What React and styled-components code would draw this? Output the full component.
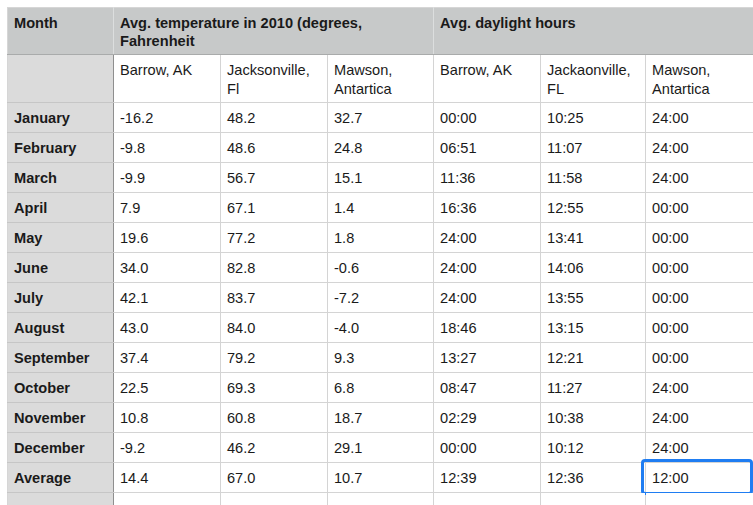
import React from "react";
import styled, { createGlobalStyle } from "styled-components";

const Global = createGlobalStyle`
  html, body { margin: 0; padding: 0; background: #ffffff; overflow: hidden; }
  body { font-family: "Liberation Sans", Arial, sans-serif; }
`;

const Page = styled.div`
  padding: 7px 0 0 7px;
  width: 753px;
  height: 505px;
  box-sizing: border-box;
  overflow: hidden;
`;

const Table = styled.table`
  border-collapse: collapse;
  table-layout: fixed;
  width: 746px;
  font-size: 14.6px;
  color: #1a1a1a;
  border-top: 1px solid #d6d6d6;
  border-left: 1px solid #d6d6d6;
`;

const Col = styled.col``;

const HeadCell = styled.th`
  background: #c7c9c9;
  font-weight: bold;
  text-align: left;
  vertical-align: top;
  padding: 6px 6px 0 6px;
  height: 40px;
  line-height: 18px;
  border-right: 1px solid #dcdede;
  border-bottom: 1px solid #a9abab;
`;

const SubCell = styled.td`
  vertical-align: top;
  padding: 6px 6px 0 6px;
  height: 41px;
  line-height: 19px;
  border-right: 1px solid #d4d4d4;
  border-bottom: 1px solid #d4d4d4;
  background: ${(p) => (p.$month ? "#dbdbdb" : "#ffffff")};
  ${(p) => p.$month && "border-right: 1px solid #8f8f8f; border-bottom-color: #c6c6c6;"}
`;

const Cell = styled.td`
  position: relative;
  padding: 1px 6px 0 6px;
  height: 28px;
  line-height: 28px;
  white-space: nowrap;
  border-right: 1px solid #d4d4d4;
  border-bottom: 1px solid #d4d4d4;
  background: ${(p) => (p.$month ? "#dbdbdb" : "#ffffff")};
  font-weight: ${(p) => (p.$month ? "bold" : "normal")};
  ${(p) => p.$month && "border-right: 1px solid #8f8f8f; border-bottom-color: #c6c6c6;"}
`;

const Selection = styled.div`
  position: absolute;
  left: -5px;
  top: -4px;
  right: 0px;
  bottom: -3px;
  border: 3px solid #1f7df2;
  border-radius: 4px;
  pointer-events: none;
`;

const rows = [
  ["January", "-16.2", "48.2", "32.7", "00:00", "10:25", "24:00"],
  ["February", "-9.8", "48.6", "24.8", "06:51", "11:07", "24:00"],
  ["March", "-9.9", "56.7", "15.1", "11:36", "11:58", "24:00"],
  ["April", "7.9", "67.1", "1.4", "16:36", "12:55", "00:00"],
  ["May", "19.6", "77.2", "1.8", "24:00", "13:41", "00:00"],
  ["June", "34.0", "82.8", "-0.6", "24:00", "14:06", "00:00"],
  ["July", "42.1", "83.7", "-7.2", "24:00", "13:55", "00:00"],
  ["August", "43.0", "84.0", "-4.0", "18:46", "13:15", "00:00"],
  ["September", "37.4", "79.2", "9.3", "13:27", "12:21", "00:00"],
  ["October", "22.5", "69.3", "6.8", "08:47", "11:27", "24:00"],
  ["November", "10.8", "60.8", "18.7", "02:29", "10:38", "24:00"],
  ["December", "-9.2", "46.2", "29.1", "00:00", "10:12", "24:00"],
  ["Average", "14.4", "67.0", "10.7", "12:39", "12:36", "12:00"],
  ["", "", "", "", "", "", ""],
];

const widths = [106, 107, 107, 106, 107, 105, 108];

export default function App() {
  return (
    <>
      <Global />
      <Page>
        <Table>
          <colgroup>
            {widths.map((w, i) => (
              <Col key={i} style={{ width: w }} />
            ))}
          </colgroup>
          <thead>
            <tr>
              <HeadCell>Month</HeadCell>
              <HeadCell colSpan={3}>
                Avg. temperature in 2010 (degrees,
                <br />
                Fahrenheit
              </HeadCell>
              <HeadCell colSpan={3}>Avg. daylight hours</HeadCell>
            </tr>
          </thead>
          <tbody>
            <tr>
              <SubCell $month />
              <SubCell>Barrow, AK</SubCell>
              <SubCell>
                Jacksonville,
                <br />
                Fl
              </SubCell>
              <SubCell>
                Mawson,
                <br />
                Antartica
              </SubCell>
              <SubCell>Barrow, AK</SubCell>
              <SubCell>
                Jackaonville,
                <br />
                FL
              </SubCell>
              <SubCell>
                Mawson,
                <br />
                Antartica
              </SubCell>
            </tr>
            {rows.map((r, ri) => (
              <tr key={ri}>
                {r.map((v, ci) => (
                  <Cell key={ci} $month={ci === 0}>
                    {v}
                    {r[0] === "Average" && ci === 6 && <Selection />}
                  </Cell>
                ))}
              </tr>
            ))}
          </tbody>
        </Table>
      </Page>
    </>
  );
}
